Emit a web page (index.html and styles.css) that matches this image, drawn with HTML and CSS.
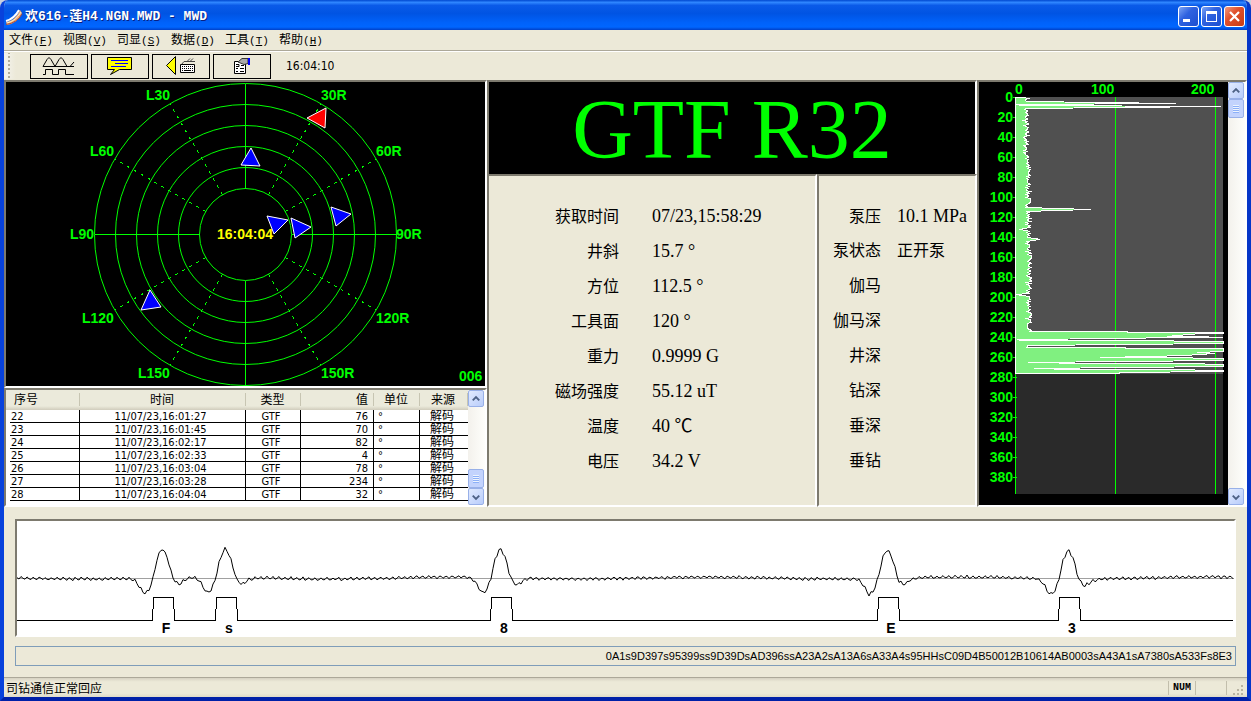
FILE: index.html
```
<!DOCTYPE html>
<html lang="zh-CN">
<head>
  <meta charset="UTF-8">
  <meta name="viewport" content="width=device-width, initial-scale=1">
  <title>欢616-莲H4.NGN.MWD - MWD</title>
  <link rel="stylesheet" href="styles.css">
</head>
<body>
<div class="window">
  <header class="titlebar">
    <svg class="app-icon" width="18" height="18" viewBox="0 0 18 18">
      <path d="M1 14 Q10 13 15 2 L17 5 Q13 15 2 17z" fill="#e9a77a"/>
      <path d="M1 13 Q9 11 14 2" fill="none" stroke="#fff" stroke-width="2"/>
      <path d="M2 15 Q11 13 16 4" fill="none" stroke="#fff3c0" stroke-width="1"/>
      <path d="M1 16.500 Q12 15 17 6" fill="none" stroke="#b05038" stroke-width="1"/>
    </svg>
    <h1>欢616-莲H4.NGN.MWD - MWD</h1>
    <div class="win-buttons">
      <button type="button" aria-label="最小化"><svg viewBox="0 0 19 19"><path d="M4 12h7v3H4z" fill="#fff"/></svg></button>
      <button type="button" aria-label="最大化"><svg viewBox="0 0 19 19"><path d="M4 4h11v11H4zM5 7v7h9V7z" fill="#fff" fill-rule="evenodd"/></svg></button>
      <button type="button" class="close" aria-label="关闭"><svg viewBox="0 0 19 19"><path d="M5 5l9 9M14 5l-9 9" stroke="#fff" stroke-width="2.200"/></svg></button>
    </div>
  </header>

  <nav class="menu">
    <a href="#">文件<span>(<u>F</u>)</span></a>
    <a href="#">视图<span>(<u>V</u>)</span></a>
    <a href="#">司显<span>(<u>S</u>)</span></a>
    <a href="#">数据<span>(<u>D</u>)</span></a>
    <a href="#">工具<span>(<u>T</u>)</span></a>
    <a href="#">帮助<span>(<u>H</u>)</span></a>
  </nav>

  <div class="toolbar">
    <span class="grip"></span>
    <button type="button" aria-label="波形">
      <svg width="34" height="20" viewBox="0 0 34 20" fill="none" stroke="#000">
        <path d="M1 10.500H32M1 10.500L5 3.500L7 1.500L9 3.500L13 10.500L17 3.500L19 1.500L21 3.500L25 10.500L28 10.500L32 6"/>
        <path d="M1 18.500H3.500V13.500H10.500V18.500H16.500V13.500H23.500V18.500H32"/>
      </svg>
    </button>
    <button type="button" aria-label="消息">
      <svg width="26" height="20" viewBox="0 0 26 20">
        <path d="M.500 1.500H24.500V13.500H12.500L3.500 18.500L7.500 13.500H.500z" fill="#ff0" stroke="#000"/>
        <path d="M4 4.500H21M8 7.500H21M4 10.500H19" stroke="#00f"/>
      </svg>
    </button>
    <button type="button" aria-label="键盘">
      <svg width="30" height="20" viewBox="0 0 30 20">
        <path d="M9.500 .500V18.500L.500 9.500z" fill="#ff0" stroke="#000"/>
        <path d="M15.500 8.500L18 5.500H29M21 5.500L24 2.500M24 5.500l3-3" fill="none" stroke="#444"/>
        <path d="M14.500 8.500H28.500V16.500H14.500z" fill="#fff" stroke="#000"/>
        <path d="M16 10.500H28M16 12.500H28" stroke="#000" stroke-dasharray="1 1"/>
        <path d="M16 14.500H17M18 14.500H25M26 14.500H27" stroke="#000"/>
      </svg>
    </button>
    <button type="button" aria-label="属性">
      <svg width="18" height="18" viewBox="0 0 18 18">
        <path d="M1.500 4.500H12.500V16.500H1.500z" fill="#fff" stroke="#000"/>
        <path d="M3 7.500h3v2H3M8 8.500h3M3 11.500h2M7 11.500h4M3 14.500h2M7 14.500h4" fill="none" stroke="#000"/>
        <path d="M5 5L9 1.500H15V6.500L11 7.500z" fill="#aaa" stroke="#333"/>
        <path d="M15 1h2v7h-2z" fill="#00f"/>
      </svg>
    </button>
    <time>16:04:10</time>
  </div>

  <main class="workspace">
    <div class="col col-left">
      <section class="pane radar">
        <svg id="radar" viewBox="0 0 479 304"></svg>
      </section>
      <section class="pane log">
        <div class="log-body">
          <table>
            <colgroup><col class="c-no"><col class="c-time"><col class="c-type"><col class="c-val"><col class="c-unit"><col></colgroup>
            <thead>
              <tr><th>序号</th><th>时间</th><th>类型</th><th>值</th><th>单位</th><th>来源</th></tr>
            </thead>
            <tbody>
              <tr><td>22</td><td>11/07/23,16:01:27</td><td>GTF</td><td>76</td><td>°</td><td>解码</td></tr>
              <tr><td>23</td><td>11/07/23,16:01:45</td><td>GTF</td><td>70</td><td>°</td><td>解码</td></tr>
              <tr><td>24</td><td>11/07/23,16:02:17</td><td>GTF</td><td>82</td><td>°</td><td>解码</td></tr>
              <tr><td>25</td><td>11/07/23,16:02:33</td><td>GTF</td><td>4</td><td>°</td><td>解码</td></tr>
              <tr><td>26</td><td>11/07/23,16:03:04</td><td>GTF</td><td>78</td><td>°</td><td>解码</td></tr>
              <tr><td>27</td><td>11/07/23,16:03:28</td><td>GTF</td><td>234</td><td>°</td><td>解码</td></tr>
              <tr><td>28</td><td>11/07/23,16:04:04</td><td>GTF</td><td>32</td><td>°</td><td>解码</td></tr>
            </tbody>
          </table>
        </div>
        <div class="scroll">
          <button type="button" aria-label="向上"><svg viewBox="0 0 15 15"><path d="M4 9l3.500-3.500L11 9"/></svg></button>
          <span class="space"></span>
          <span class="thumb"></span>
          <button type="button" aria-label="向下"><svg viewBox="0 0 15 15"><path d="M4 6l3.500 3.500L11 6"/></svg></button>
        </div>
      </section>
    </div>

    <div class="col col-mid">
      <section class="pane gtf">GTF R32</section>
      <div class="params">
        <dl class="pane survey">
          <dt>获取时间</dt><dd>07/23,15:58:29</dd>
          <dt>井斜</dt><dd>15.7 °</dd>
          <dt>方位</dt><dd>112.5 °</dd>
          <dt>工具面</dt><dd>120 °</dd>
          <dt>重力</dt><dd>0.9999 G</dd>
          <dt>磁场强度</dt><dd>55.12 uT</dd>
          <dt>温度</dt><dd>40 ℃</dd>
          <dt>电压</dt><dd>34.2 V</dd>
        </dl>
        <dl class="pane pump">
          <dt>泵压</dt><dd>10.1 MPa</dd>
          <dt>泵状态</dt><dd class="cn">正开泵</dd>
          <dt>伽马</dt><dd></dd>
          <dt>伽马深</dt><dd></dd>
          <dt>井深</dt><dd></dd>
          <dt>钻深</dt><dd></dd>
          <dt>垂深</dt><dd></dd>
          <dt>垂钻</dt><dd></dd>
        </dl>
      </div>
    </div>

    <section class="pane gamma">
      <svg id="gamma" viewBox="0 0 249 423"></svg>
      <div class="scroll">
        <button type="button" aria-label="向上"><svg viewBox="0 0 15 15"><path d="M4 9l3.500-3.500L11 9"/></svg></button>
        <span class="thumb"></span>
        <span class="space"></span>
        <button type="button" aria-label="向下"><svg viewBox="0 0 15 15"><path d="M4 6l3.500 3.500L11 6"/></svg></button>
      </div>
    </section>
  </main>

  <section class="decode">
    <div class="pane wave"><svg id="wave" viewBox="0 0 1217 114"></svg></div>
    <input type="text" class="codes" readonly aria-label="码流" value="0A1s9D397s95399ss9D39DsAD396ssA23A2sA13A6sA33A4s95HHsC09D4B50012B10614AB0003sA43A1sA7380sA533Fs8E3">
  </section>

  <footer class="status">
    <span class="msg">司钻通信正常回应</span>
    <span class="cell">NUM</span>
    <span class="cell"></span>
    <svg width="12" height="12" viewBox="0 0 12 12" fill="#b8b4a2"><path d="M8 0h2v2H8zM4 4h2v2H4zM8 4h2v2H8zM0 8h2v2H0zM4 8h2v2H4zM8 8h2v2H8z"/></svg>
  </footer>
</div>
<script src="script.js"></script>
</body>
</html>
```
FILE: styles.css
```
* { box-sizing: border-box; }

body {
  margin: 0;
  background: #c8d0e0;
  font-family: "DejaVu Sans Condensed", "Noto Sans CJK SC", sans-serif;
  font-size: 12px;
  color: #000;
}

button { padding: 0; font: inherit; }
svg { display: block; }

.window {
  display: flex;
  flex-direction: column;
  height: 100vh;
  min-height: 600px;
  min-width: 900px;
  background: #ece9d8;
  border: 4px solid #0842dc;
  border-color: #0842dc #0636c8 #0020a8 #0842dc;
  border-top: 0;
  border-radius: 8px 8px 0 0;
  overflow: hidden;
}

/* title bar */
.titlebar {
  display: flex;
  align-items: center;
  flex: none;
  height: 30px;
  margin: 0 -4px;
  padding: 3px 6px 0 5px;
  background: linear-gradient(#0048d0 0, #2f86ff 8%, #0a5ae8 18%, #0054e3 45%, #0062fa 75%, #0066ff 90%, #0040c8 100%);
}

.titlebar h1 {
  flex: 1;
  margin: 0 0 0 2px;
  font: bold 13px/18px "Liberation Mono", "Noto Sans CJK SC", monospace;
  color: #fff;
  text-shadow: 1px 1px 0 #0a1f80;
  white-space: pre;
}

.win-buttons { display: flex; gap: 2px; }

.win-buttons button {
  width: 21px;
  height: 21px;
  border: 1px solid #fff;
  border-radius: 3px;
  background: linear-gradient(135deg, #7da5f5, #2f62e0 40%, #1c4fd0);
}

.win-buttons .close { background: linear-gradient(135deg, #f09a80, #e0502c 40%, #c83c14); }

/* menu and tools */
.menu {
  display: flex;
  flex: none;
  height: 21px;
  padding-left: 5px;
  border-bottom: 1px solid #aca899;
}

.menu a {
  width: 54px;
  line-height: 21px;
  color: #000;
  text-decoration: none;
  white-space: nowrap;
}

.menu span { font-family: "Liberation Mono", monospace; font-size: 11px; }

.toolbar {
  display: flex;
  align-items: center;
  flex: none;
  gap: 3px;
  height: 29px;
  border-top: 1px solid #fff;
}

.grip {
  width: 12px;
  height: 26px;
  margin-right: 11px;
  background: radial-gradient(circle at 5px 2px, #b0ac9a 1px, transparent 1px) 0 2px / 12px 4px repeat-y, linear-gradient(90deg, #f4f3ee, #ece9d8);
}

.toolbar button {
  display: flex;
  align-items: center;
  justify-content: center;
  width: 58px;
  height: 25px;
  border: 1px solid #000;
  background: #ece9d8;
}

.toolbar time { margin-left: 12px; }

/* panes */
.workspace {
  display: grid;
  grid-template-columns: 483fr 490fr 270fr;
  flex: 1;
  min-height: 0;
}

.col { display: grid; min-width: 0; min-height: 0; }
.col-left { grid-template-rows: 1fr 119px; }
.col-mid { grid-template-rows: 94px 1fr; }

.pane {
  min-width: 0;
  min-height: 0;
  margin: 0;
  border: 2px solid;
  border-color: #7d7a6e #fff #fff #7d7a6e;
}

.radar, .gtf, .gamma { background: #000; }
.radar svg { width: 100%; height: 100%; }

.gtf {
  border-bottom: 0;
  color: #0f0;
  font: 84px/96px "Liberation Serif", serif;
  text-align: center;
  white-space: nowrap;
}

/* decoded log */
.log { display: flex; background: #fff; }

.log-body {
  flex: 1;
  padding-left: 4px;
  background: linear-gradient(#ebeadb 80%, #d0ccbc) 0 0 / 100% 20px no-repeat;
}

.log table {
  width: 100%;
  table-layout: fixed;
  border-collapse: separate;
  border-spacing: 0;
}

.c-no { width: 70px; }
.c-time { width: 166px; }
.c-type { width: 55px; }
.c-val { width: 73px; }
.c-unit { width: 46px; }

.log th {
  height: 20px;
  padding: 1px 6px 0 4px;
  font-weight: normal;
  line-height: 19px;
  background: linear-gradient(#c7c5b2, #c7c5b2) right 3px / 1px 13px no-repeat;
}

.log td {
  height: 13px;
  padding: 1px 5px 0 1px;
  border-right: 1px solid #000;
  border-bottom: 1px solid #000;
  font-size: 11px;
  line-height: 11px;
  text-align: center;
  overflow: hidden;
  white-space: nowrap;
}

.log th:first-child, .log td:first-child, .log td:nth-child(5) { text-align: left; }
.log td:nth-child(5) { padding-left: 4px; }
.log th:nth-child(4), .log td:nth-child(4) { text-align: right; }
.log td:last-child { border-right: 0; font-size: 12px; }

/* scroll bars */
.scroll {
  display: flex;
  flex-direction: column;
  flex: none;
  width: 17px;
  background: linear-gradient(90deg, #f3f1ec, #fefefb);
}

.scroll button, .thumb {
  flex: none;
  width: 16px;
  height: 17px;
  border: 1px solid #98b0e8;
  border-radius: 2px;
  background: linear-gradient(135deg, #e1eafe, #b9cdfb);
}

.scroll path { fill: none; stroke: #4d6185; stroke-width: 2; }
.space { flex: 1; }

.thumb {
  height: 19px;
  background: repeating-linear-gradient(#eef4fe 0 1px, #8cb0f8 1px 2px) 4px 5px / 6px 8px no-repeat, #c3d3fd;
}

/* survey values */
.params {
  display: grid;
  grid-template-columns: 330fr 160fr;
  min-height: 0;
}

.survey, .pump {
  display: grid;
  grid-auto-rows: 35px;
  align-content: start;
  align-items: baseline;
  padding-top: 28px;
  font-size: 16px;
  line-height: 24px;
  white-space: nowrap;
}

.survey { grid-template-columns: 130px 1fr; column-gap: 33px; }
.pump { grid-template-columns: 62px 1fr; column-gap: 16px; }
.params dt { text-align: right; }
.params dd { margin: 0; font-family: "Liberation Serif", "Noto Sans CJK SC", serif; font-size: 18px; }
.params .cn { font-size: 16px; }

.gamma { display: flex; }
.gamma > svg { flex: 1; min-width: 0; height: 100%; }

/* signal */
.decode {
  display: flex;
  flex-direction: column;
  flex: none;
  gap: 9px;
  padding: 12px 11px 11px;
  border-bottom: 1px solid #aca899;
}

.wave { background: #fff; }
.wave svg { width: 100%; }

.codes {
  width: 100%;
  height: 20px;
  padding: 0 3px;
  border: 1px solid #7f9db9;
  background: #ece9d8;
  font: 11px "Liberation Sans", sans-serif;
  text-align: right;
}

.status {
  display: flex;
  align-items: center;
  flex: none;
  height: 19px;
  padding: 0 2px;
  background: linear-gradient(#d6d2c2, #ece9d8 20%, #ece9d8 80%, #dedac8);
}

.msg { flex: 1; }

.cell {
  min-width: 27px;
  height: 14px;
  padding: 0 4px;
  border-left: 1px solid #c2beac;
  font: bold 10px/14px "Liberation Mono", monospace;
}

.cell + .cell { width: 32px; border-right: 1px solid #c2beac; }
.status svg { margin-left: 6px; align-self: flex-end; }

/* chart text */
#radar text, #gamma text, #wave text {
  font: bold 14px "Liberation Sans", sans-serif;
}

#radar text, #gamma text { fill: #0f0; }
#radar .now { fill: #ff0; }
#gamma .depth { text-anchor: end; }
#wave text { text-anchor: middle; }
.ring, .spoke, .scale { fill: none; stroke: #0f0; }
.spoke, .scale, .gate, .zero { shape-rendering: crispEdges; }
.dashed { stroke-dasharray: 3 5; }
.mark { fill: #00f; stroke: #fff; }
.latest { fill: #f00; }
.logged { fill: #505050; }
.ahead { fill: #2a2a2a; }
.curve { fill: #80f080; stroke: #fff; shape-rendering: crispEdges; }
.zero { stroke: #a0a0a0; }
.signal, .gate { fill: none; stroke: #000; }
```
FILE: script.js
```
const NS = "http://www.w3.org/2000/svg";

function add(svg, tag, attrs, text) {
  const el = document.createElementNS(NS, tag);
  for (const k in attrs) el.setAttribute(k, attrs[k]);
  if (text !== undefined) el.textContent = text;
  svg.appendChild(el);
}

// repeatable noise
let seed = 7;
function rnd() {
  seed = (seed * 16807) % 2147483647;
  return seed / 2147483647;
}

// tool face dial
const radar = document.getElementById("radar");
const cx = 239.5, cy = 152.5;
for (let r = 46; r <= 151; r += 21) {
  add(radar, "circle", { cx: cx, cy: cy, r: r, class: "ring" });
}
for (let a = 0; a < 360; a += 30) {
  const s = Math.sin(a * Math.PI / 180), c = Math.cos(a * Math.PI / 180);
  add(radar, "line", {
    x1: cx + 46 * s, y1: cy - 46 * c, x2: cx + 151 * s, y2: cy - 151 * c,
    class: a % 90 ? "spoke dashed" : "spoke"
  });
}
[["L30", 140, 18], ["30R", 315, 18], ["L60", 84, 74], ["60R", 370, 74],
 ["L90", 64, 157], ["90R", 390, 157], ["L120", 76, 241], ["120R", 370, 241],
 ["L150", 132, 296], ["150R", 315, 296], ["006", 453, 299]].forEach(l => {
  add(radar, "text", { x: l[1], y: l[2] }, l[0]);
});
["245,66 235,83 254,84", "261,134 282,138 268,152", "285,136 305,145 289,156",
 "325,125 345,132 330,144", "144,208 155,225 135,228"].forEach(p => {
  add(radar, "polygon", { points: p, class: "mark" });
});
add(radar, "polygon", { points: "301,36 320,26 319,46", class: "mark latest" });
add(radar, "text", { x: 211, y: 157, class: "now" }, "16:04:04");

// gamma log, one pixel per metre and per unit
const gamma = document.getElementById("gamma");
const gx = 36, gy = 15;
add(gamma, "rect", { x: gx, y: gy, width: 208, height: 277, class: "logged" });
add(gamma, "rect", { x: gx, y: gy + 277, width: 208, height: 120, class: "ahead" });
add(gamma, "path", { d: "M136.5 15V412M236.5 15V412M36.5 291V412", class: "scale" });

const spikes = {
  5: 86, 6: 161, 7: 0, 8: 7, 9: 206, 10: 108, 111: 42, 112: 76, 113: 42,
  131: 10, 132: 4, 141: 20, 142: 25, 143: 18, 197: 0, 198: 8
};
const pts = [];
for (let d = 0; d < 234; d++) {
  const base = d < 60 ? 11 : d < 150 ? 13 : 14;
  pts.push([d, d in spikes ? spikes[d] : Math.round(base + (rnd() - 0.5) * 5)]);
}
pts.push([234, 15], [234, 112], [235, 112], [235, 208], [236, 208], [236, 186], [238, 162], [239, 152],
  [239, 180], [240, 208], [240, 155], [241, 108], [242, 2], [243, 6], [243, 109], [244, 208],
  [246, 208], [247, 110], [248, 13], [250, 12], [250, 110], [251, 110], [251, 208], [254, 208],
  [255, 182], [256, 200], [258, 169], [259, 136], [260, 85], [260, 147], [261, 208],
  [263, 208], [264, 110], [265, 13], [266, 74], [266, 171], [267, 208], [269, 208], [270, 113],
  [271, 19], [272, 58], [272, 152], [273, 208], [274, 208], [275, 104], [276, 104], [276, 0]);
add(gamma, "polygon", {
  points: "36,15 " + pts.map(p => (gx + p[1]) + "," + (gy + p[0] + 0.5)).join(" "),
  class: "curve"
});
[[0, 36], [100, 112], [200, 212]].forEach(t => add(gamma, "text", { x: t[1], y: 12 }, t[0]));
for (let d = 0; d <= 380; d += 20) {
  add(gamma, "text", { x: 34, y: gy + d + 5, class: "depth" }, d);
  add(gamma, "line", { x1: 34, x2: d > 276 ? 38 : 36, y1: gy + d + 0.5, y2: gy + d + 0.5, class: "scale" });
}

// pulse wave
const wave = document.getElementById("wave");
const shape = [[-32, 0], [-26, 3], [-18, 16], [-13, 12], [-9, 0], [-5, -18], [-1, -28], [1, -28],
  [5, -21], [9, -6], [12, 3], [17, 7], [24, 2], [32, 0]];
const pulses = [[145, "F"], [208, "s"], [483, "8"], [870, "E"], [1051, "3"]];

function pulse(o) {
  for (let i = 1; i < shape.length; i++) {
    const a = shape[i - 1], b = shape[i];
    if (o >= a[0] && o <= b[0]) return a[1] + (b[1] - a[1]) * (o - a[0]) / (b[0] - a[0]);
  }
  return 0;
}

let line = "", gate = "M0 99.5";
for (let x = 0; x <= 1217; x += 2) {
  let y = 57 + Math.sin(x * 1.05) * 1.5 + Math.sin(x / 40) + (rnd() - 0.5);
  pulses.forEach(p => { y += pulse(x - p[0]); });
  line += (x ? "L" : "M") + x + " " + y.toFixed(1);
}
pulses.forEach(p => {
  const x = p[0] - 9.5;
  gate += "H" + x + "L" + (x + 1) + " 76.5H" + (x + 21) + "L" + (x + 22) + " 99.5";
  add(wave, "text", { x: p[0] + 4, y: 112 }, p[1]);
});
add(wave, "path", { d: "M0 57.5H1217", class: "zero" });
add(wave, "path", { d: line, class: "signal" });
add(wave, "path", { d: gate + "H1216", class: "gate" });
```
